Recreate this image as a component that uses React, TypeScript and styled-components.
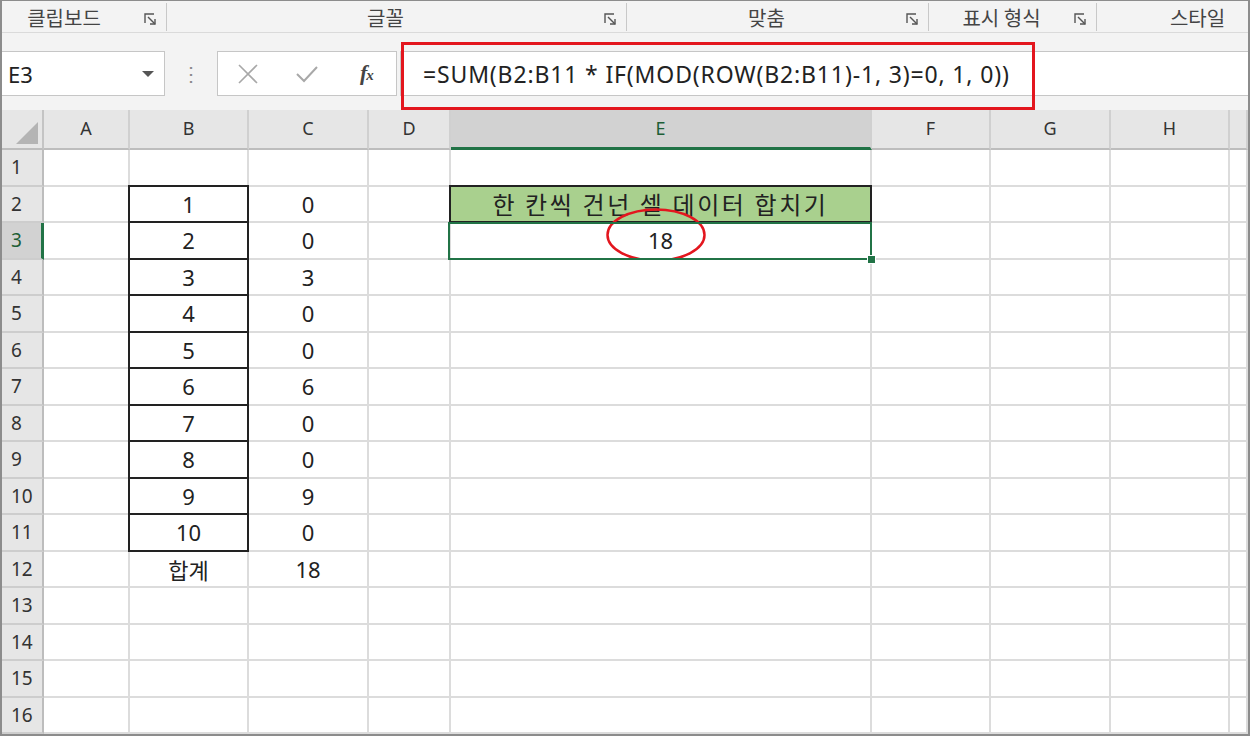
import React from 'react';
import styled, { createGlobalStyle } from 'styled-components';

const GlobalStyle = createGlobalStyle`
  html, body {
    margin: 0;
    padding: 0;
    background: #ffffff;
  }
  body {
    font-family: "Noto Sans", "Noto Sans CJK KR", sans-serif;
  }
`;

const UI = `"Noto Sans", "Noto Sans CJK KR", sans-serif`;
const KR = `"Noto Sans CJK KR", "Noto Sans", sans-serif`;

// outer window frame
const Frame = styled.div`
  width: 1250px;
  height: 736px;
  box-sizing: border-box;
  border: 2px solid #8c8c8c;
  border-top-width: 1px;
  display: flex;
  flex-direction: column;
  overflow: hidden;
  background: #ffffff;
`;

// ribbon group labels
const Ribbon = styled.div`
  height: 32px;
  display: flex;
  background: #f3f3f3;
  border-bottom: 1px solid #dadada;
  box-sizing: border-box;
`;

const Group = styled.div<{ $width: string; $padLeft?: number; $padRight?: number }>`
  flex: 0 0 ${(p) => p.$width};
  display: flex;
  align-items: center;
  box-sizing: border-box;
  position: relative;

  & > span:first-child {
    padding-left: ${(p) => p.$padLeft || 0}px;
    padding-right: ${(p) => p.$padRight || 0}px;
  }
`;

const GroupLabel = styled.span`
  flex: 1;
  text-align: center;
  font-family: ${KR};
  font-size: 20px;
  color: #444;
  padding-top: 1px;
`;

const Launcher = styled.span`
  width: 22px;
  display: flex;
  align-items: center;
  justify-content: flex-start;
  padding-top: 6px;
`;

const GroupSep = styled.span`
  width: 1px;
  height: 28px;
  background: #c8c8c8;
  align-self: flex-start;
  margin-top: 2px;
`;

// formula bar
const FormulaBar = styled.div`
  height: 77px;
  box-sizing: border-box;
  background: #f3f3f3;
  display: flex;
  align-items: flex-start;
  padding-top: 18px;
  position: relative;
`;

const NameBox = styled.div`
  width: 163px;
  height: 45px;
  box-sizing: border-box;
  background: #fff;
  border: 1px solid #c6c6c6;
  border-left: none;
  display: flex;
  align-items: center;
  justify-content: space-between;
  padding: 0 10px 0 6px;
  font-family: ${UI};
  font-size: 22px;
  color: #222;
`;

const Caret = styled.span`
  width: 0;
  height: 0;
  border-left: 6px solid transparent;
  border-right: 6px solid transparent;
  border-top: 6px solid #555;
`;

const Dots = styled.div`
  width: 52px;
  height: 45px;
  display: flex;
  align-items: center;
  justify-content: center;
  color: #8a8a8a;
  font-size: 20px;
  font-family: ${UI};
`;

const ButtonBox = styled.div`
  width: 180px;
  height: 45px;
  box-sizing: border-box;
  background: #fff;
  border: 1px solid #c6c6c6;
  display: grid;
  grid-template-columns: repeat(3, 1fr);
  align-items: center;
  justify-items: center;
`;

const Fx = styled.span`
  font-family: "Liberation Serif", serif;
  font-style: italic;
  font-weight: bold;
  font-size: 22px;
  color: #444;
  letter-spacing: -1px;
  padding-bottom: 2px;

  small {
    font-size: 15px;
  }
`;

const FormulaInput = styled.div`
  flex: 1;
  height: 45px;
  margin-left: 3px;
  box-sizing: border-box;
  background: #fff;
  border: 1px solid #c6c6c6;
  border-right: none;
  display: flex;
  align-items: center;
  padding-left: 22px;
  font-family: ${UI};
  font-size: 23px;
  letter-spacing: 0.85px;
  color: #222;
  white-space: nowrap;
`;

const RedBox = styled.div`
  position: absolute;
  left: 399px;
  top: 9px;
  width: 634px;
  height: 68px;
  box-sizing: border-box;
  border: 3px solid #e3161e;
  pointer-events: none;
`;

// worksheet grid
const Sheet = styled.div`
  flex: 1;
  display: grid;
  grid-template-columns: 42px 86px 119px 120px 82px 421px 119px 120px 119px 1fr;
  grid-template-rows: 40px repeat(16, 36.5px);
`;

const Corner = styled.div`
  background: #e6e6e6;
  border-right: 2px solid #c4c4c4;
  border-bottom: 2px solid #bdbdbd;
  display: flex;
  align-items: flex-end;
  justify-content: flex-end;
  padding: 0 4px 4px 0;
`;

const ColHead = styled.div<{ $selected?: boolean }>`
  background: ${(p) => (p.$selected ? '#d2d2d2' : '#e6e6e6')};
  border-right: 2px solid #d0d0d0;
  border-bottom: ${(p) => (p.$selected ? '3px solid #217346' : '2px solid #bdbdbd')};
  display: flex;
  align-items: center;
  justify-content: center;
  font-family: ${UI};
  font-size: 18px;
  color: ${(p) => (p.$selected ? '#1d5e36' : '#333')};
  padding-bottom: 2px;
`;

const RowHead = styled.div<{ $selected?: boolean }>`
  background: ${(p) => (p.$selected ? '#d2d2d2' : '#e6e6e6')};
  border-right: ${(p) => (p.$selected ? '3px solid #217346' : '2px solid #bdbdbd')};
  border-bottom: 2px solid #cdcdcd;
  display: flex;
  align-items: center;
  padding-left: 9px;
  font-family: ${UI};
  font-size: 19px;
  color: ${(p) => (p.$selected ? '#1d5e36' : '#333')};
`;

const Cell = styled.div<{ $boxed?: boolean; $top?: boolean; $fill?: string; $active?: boolean; $kr?: boolean }>`
  position: relative;
  background: ${(p) => p.$fill || '#fff'};
  border-right: 2px solid ${(p) => (p.$boxed ? '#222' : '#dcdcdc')};
  border-bottom: 2px solid ${(p) => (p.$boxed ? '#222' : '#dcdcdc')};
  box-shadow: ${(p) =>
    p.$boxed
      ? p.$top
        ? '-2px 0 0 #222, 0 -2px 0 #222, -2px -2px 0 #222'
        : '-2px 0 0 #222'
      : 'none'};
  display: flex;
  align-items: center;
  justify-content: center;
  font-family: ${(p) => (p.$kr ? KR : UI)};
  font-size: 22px;
  color: #222;
  white-space: nowrap;

  ${(p) =>
    p.$active &&
    `
    &::after {
      content: '';
      position: absolute;
      left: -3px;
      top: -1px;
      right: -2px;
      bottom: -2px;
      border: 2px solid #217346;
      pointer-events: none;
    }
    &::before {
      content: '';
      position: absolute;
      right: -6px;
      bottom: -6px;
      width: 7px;
      height: 7px;
      background: #217346;
      border: 1px solid #fff;
      z-index: 2;
    }
  `}
`;

const Ellipse = styled.svg`
  position: absolute;
  left: 155px;
  top: -15px;
  overflow: visible;
  pointer-events: none;
`;

const CellText = styled.span<{ $spacing?: number; $size?: number }>`
  letter-spacing: ${(p) => p.$spacing || 0}px;
  font-size: ${(p) => p.$size || 22}px;
`;

const LauncherIcon: React.FC = () => (
  <svg width="13" height="13" viewBox="0 0 13 13" fill="none" stroke="#555" strokeWidth="1.4">
    <path d="M1 10 V1 H10" />
    <path d="M4 4 L11 11" />
    <path d="M11 6 V11 H6" />
  </svg>
);

const CancelIcon: React.FC = () => (
  <svg width="22" height="22" viewBox="0 0 22 22" fill="none" stroke="#a8a8a8" strokeWidth="1.6">
    <path d="M2 2 L20 20 M20 2 L2 20" />
  </svg>
);

const EnterIcon: React.FC = () => (
  <svg width="24" height="18" viewBox="0 0 24 18" fill="none" stroke="#a8a8a8" strokeWidth="2">
    <path d="M2 9 L9 16 L22 2" />
  </svg>
);

const groups = [
  { label: '클립보드', width: '165px', launcher: true, padRight: 18 },
  { label: '글꼴', width: '460px', launcher: true },
  { label: '맞춤', width: '302px', launcher: true },
  { label: '표시 형식', width: '168px', launcher: true },
  { label: '스타일', width: '153px', launcher: false, padLeft: 48 },
];

const columns = ['A', 'B', 'C', 'D', 'E', 'F', 'G', 'H', ''];

const bValues = ['1', '2', '3', '4', '5', '6', '7', '8', '9', '10'];
const cValues = ['0', '0', '3', '0', '0', '6', '0', '0', '9', '0'];

const renderRow = (r: number) => {
  const cells: React.ReactNode[] = [];
  cells.push(
    <RowHead key={`h${r}`} $selected={r === 3}>
      {r}
    </RowHead>
  );
  for (let c = 0; c < 9; c++) {
    const key = `${r}-${c}`;
    if (c === 1 && r >= 2 && r <= 11) {
      cells.push(
        <Cell key={key} $boxed $top={r === 2}>
          {bValues[r - 2]}
        </Cell>
      );
    } else if (c === 2 && r >= 2 && r <= 11) {
      cells.push(<Cell key={key}>{cValues[r - 2]}</Cell>);
    } else if (c === 1 && r === 12) {
      cells.push(
        <Cell key={key} $kr>
          합계
        </Cell>
      );
    } else if (c === 2 && r === 12) {
      cells.push(<Cell key={key}>18</Cell>);
    } else if (c === 4 && r === 2) {
      cells.push(
        <Cell key={key} $boxed $top $fill="#a9d08e" $kr>
          <CellText $spacing={2.6} $size={24}>
            한 칸씩 건넌 셀 데이터 합치기
          </CellText>
        </Cell>
      );
    } else if (c === 4 && r === 3) {
      cells.push(
        <Cell key={key} $active>
          18
          <Ellipse width="100" height="54" viewBox="0 0 100 54">
            <ellipse cx="50" cy="27" rx="48.5" ry="25.5" fill="none" stroke="#e3161e" strokeWidth="2.5" />
          </Ellipse>
        </Cell>
      );
    } else {
      cells.push(<Cell key={key} />);
    }
  }
  return cells;
};

const App: React.FC = () => {
  const rows = Array.from({ length: 16 }, (_, i) => i + 1);
  return (
    <>
      <GlobalStyle />
      <Frame>
        <Ribbon>
          {groups.map((g) => (
            <Group key={g.label} $width={g.width} $padLeft={g.padLeft} $padRight={g.padRight}>
              <GroupLabel>{g.label}</GroupLabel>
              {g.launcher && (
                <>
                  <Launcher>
                    <LauncherIcon />
                  </Launcher>
                  <GroupSep />
                </>
              )}
            </Group>
          ))}
        </Ribbon>

        <FormulaBar>
          <NameBox>
            <span>E3</span>
            <Caret />
          </NameBox>
          <Dots>⋮</Dots>
          <ButtonBox>
            <CancelIcon />
            <EnterIcon />
            <Fx>
              f<small>x</small>
            </Fx>
          </ButtonBox>
          <FormulaInput>=SUM(B2:B11 * IF(MOD(ROW(B2:B11)-1, 3)=0, 1, 0))</FormulaInput>
          <RedBox />
        </FormulaBar>

        <Sheet>
          <Corner>
            <svg width="22" height="22" viewBox="0 0 22 22">
              <polygon points="22,0 22,22 0,22" fill="#b4b4b4" />
            </svg>
          </Corner>
          {columns.map((c, i) => (
            <ColHead key={`c${i}`} $selected={c === 'E'}>
              {c}
            </ColHead>
          ))}
          {rows.map((r) => renderRow(r))}
        </Sheet>
      </Frame>
    </>
  );
};

export default App;
